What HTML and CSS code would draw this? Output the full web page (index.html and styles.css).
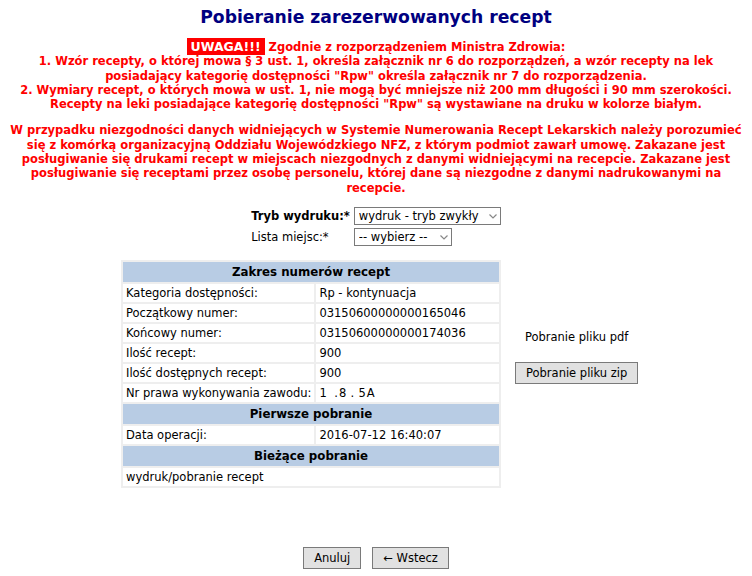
FILE: index.html
```html
<!DOCTYPE html>
<html>
<head>
  <meta charset="utf-8">
  <title>Pobieranie zarezerwowanych recept</title>
  <link rel="stylesheet" href="styles.css">
</head>
<body>
  <h1 class="title">Pobieranie zarezerwowanych recept</h1>

  <div class="notice">
    <p>
      <span class="badge">UWAGA!!!</span> Zgodnie z rozporządzeniem Ministra Zdrowia:<br>
      1. Wzór recepty, o której mowa § 3 ust. 1, określa załącznik nr 6 do rozporządzeń, a wzór recepty na lek<br>
      posiadający kategorię dostępności "Rpw" określa załącznik nr 7 do rozporządzenia.<br>
      2. Wymiary recept, o których mowa w ust. 1, nie mogą być mniejsze niż 200 mm długości i 90 mm szerokości.<br>
      Recepty na leki posiadające kategorię dostępności "Rpw" są wystawiane na druku w kolorze białym.
    </p>
    <p>
      W przypadku niezgodności danych widniejących w Systemie Numerowania Recept Lekarskich należy porozumieć<br>
      się z komórką organizacyjną Oddziału Wojewódzkiego NFZ, z którym podmiot zawarł umowę. Zakazane jest<br>
      posługiwanie się drukami recept w miejscach niezgodnych z danymi widniejącymi na recepcie. Zakazane jest<br>
      posługiwanie się receptami przez osobę personelu, której dane są niezgodne z danymi nadrukowanymi na<br>
      recepcie.
    </p>
  </div>

  <form class="mode-form">
    <label class="field-label required" for="tryb">Tryb wydruku:*</label>
    <div class="select-wrap">
      <select id="tryb" class="select select-wide">
        <option>wydruk - tryb zwykły</option>
      </select>
      <svg class="chevron" width="8" height="5" viewBox="0 0 8 5"><path d="M0.5 0.5 L4 4 L7.5 0.5" fill="none" stroke="#888" stroke-width="1.2"/></svg>
    </div>
    <label class="field-label" for="miejsca">Lista miejsc:*</label>
    <div class="select-wrap">
      <select id="miejsca" class="select select-narrow">
        <option>-- wybierz --</option>
      </select>
      <svg class="chevron" width="8" height="5" viewBox="0 0 8 5"><path d="M0.5 0.5 L4 4 L7.5 0.5" fill="none" stroke="#888" stroke-width="1.2"/></svg>
    </div>
  </form>

  <div class="details">
    <table class="info-table">
      <tr><th colspan="2">Zakres numerów recept</th></tr>
      <tr><td class="key">Kategoria dostępności:</td><td>Rp - kontynuacja</td></tr>
      <tr><td class="key">Początkowy numer:</td><td>03150600000000165046</td></tr>
      <tr><td class="key">Końcowy numer:</td><td>03150600000000174036</td></tr>
      <tr><td class="key">Ilość recept:</td><td>900</td></tr>
      <tr><td class="key">Ilość dostępnych recept:</td><td>900</td></tr>
      <tr><td class="key">Nr prawa wykonywania zawodu:</td><td><span class="masked">1&#8201;&#8201;.8&#8201;.&#8201;5A</span></td></tr>
      <tr><th colspan="2">Pierwsze pobranie</th></tr>
      <tr><td class="key">Data operacji:</td><td>2016-07-12 16:40:07</td></tr>
      <tr><th colspan="2">Bieżące pobranie</th></tr>
      <tr><td colspan="2">wydruk/pobranie recept</td></tr>
    </table>

    <div class="downloads">
      <div class="pdf-link">Pobranie pliku pdf</div>
      <button type="button" class="btn">Pobranie pliku zip</button>
    </div>
  </div>

  <div class="actions">
    <button type="button" class="btn">Anuluj</button>
    <button type="button" class="btn">&larr; Wstecz</button>
  </div>
</body>
</html>
```

FILE: styles.css
```css
body {
  font-family: "DejaVu Sans", Verdana, sans-serif;
  font-size: 11.5px;
  color: #000;
  margin: 8px;
  background: #fff;
}

.title {
  font-size: 17.2px;
  font-weight: bold;
  color: #000080;
  text-align: center;
  margin: 0 0 14px 0;
  line-height: 18px;
}

.notice {
  color: #ff0000;
  font-weight: bold;
  text-align: center;
  line-height: 14.3px;
}

.notice p {
  margin: 0 0 12px 0;
}

.badge {
  background: #ff0000;
  color: #fff;
  padding: 1px 4px;
  font-size: 12.5px;
}

.mode-form {
  display: grid;
  grid-template-columns: auto auto;
  justify-content: center;
  column-gap: 4px;
  row-gap: 3px;
  margin: 12px 0 14px 0;
}

.field-label {
  padding-top: 2px;
}

.field-label.required {
  font-weight: bold;
}

.select-wrap {
  position: relative;
}

.select {
  appearance: none;
  -webkit-appearance: none;
  font-family: inherit;
  font-size: 11.5px;
  height: 18px;
  padding: 0 18px 0 4px;
  border: 1px solid #7a7a7a;
  border-radius: 0;
  background: #fff;
  color: #000;
}

.select-wide {
  width: 147px;
}

.select-narrow {
  width: 98px;
}

.chevron {
  position: absolute;
  left: 0;
  top: 7px;
  pointer-events: none;
}

.select-wide + .chevron {
  left: 135px;
}

.select-narrow + .chevron {
  left: 86px;
}

.details {
  display: flex;
  align-items: flex-start;
  margin-left: 113px;
  gap: 14px;
}

.info-table {
  width: 380px;
  background: #eeeeee;
  border-spacing: 2px;
}

.info-table th {
  background: #b8cce4;
  font-weight: bold;
  font-size: 11.8px;
  text-align: center;
  height: 20px;
  padding: 0 3px;
}

.info-table td {
  background: #fff;
  height: 18px;
  padding: 0 3px;
  white-space: nowrap;
}

.info-table td.key {
  width: 183px;
}

.masked {
  letter-spacing: 1px;
}

.downloads {
  display: flex;
  flex-direction: column;
  align-items: center;
  margin-top: 70px;
}

.pdf-link {
  margin-bottom: 18px;
}

.btn {
  font-family: inherit;
  font-size: 11.5px;
  background: #e1e1e1;
  border: 1px solid #7a7a7a;
  padding: 3px 10px;
  height: 22px;
  color: #000;
}

.actions {
  display: flex;
  justify-content: center;
  gap: 11px;
  margin-top: 59px;
}
```
